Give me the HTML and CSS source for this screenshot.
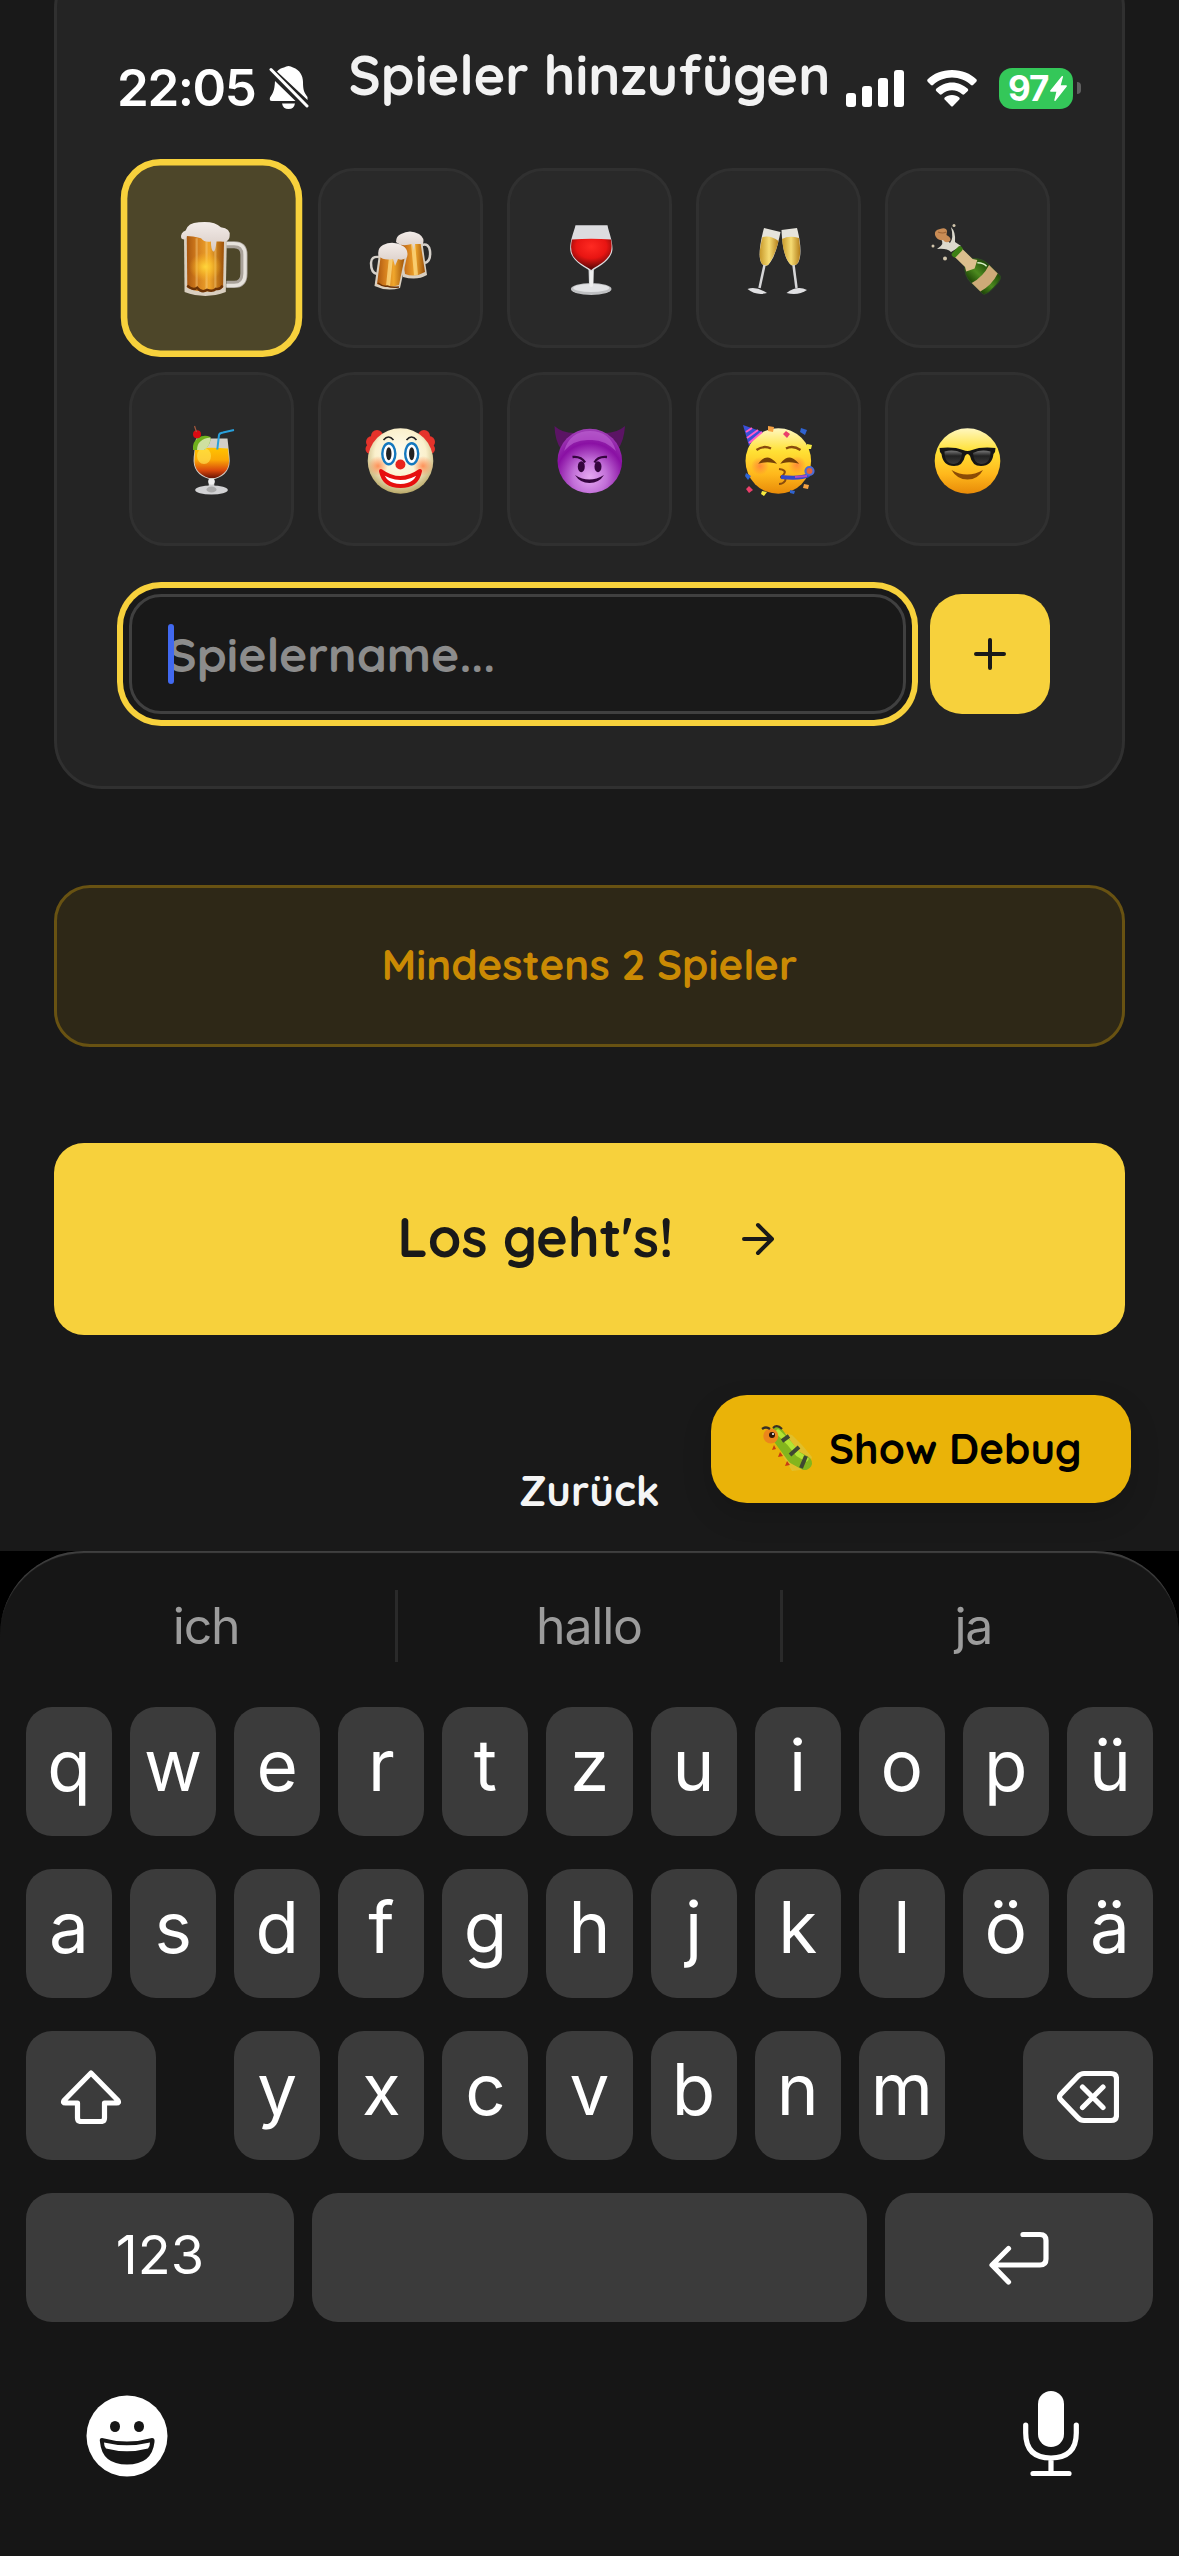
FILE: index.html
```html
<!DOCTYPE html>
<html lang="de">
<head>
<meta charset="utf-8">
<title>Spieler hinzufügen</title>
<link rel="stylesheet" href="styles.css">
</head>
<body>
<svg class="defs" width="0" height="0" aria-hidden="true">
  <defs>
    <linearGradient id="beer"><stop offset="0" stop-color="#a8560f"/><stop offset=".25" stop-color="#d07a1c"/><stop offset=".6" stop-color="#f0a62c"/><stop offset="1" stop-color="#9a4f08"/></linearGradient>
    <radialGradient id="glow"><stop offset="0" stop-color="#ffd53a"/><stop offset="1" stop-color="#ffb820" stop-opacity="0"/></radialGradient>
    <linearGradient id="foam" x2="0" y2="1"><stop offset="0" stop-color="#f3ece9"/><stop offset="1" stop-color="#d8cbc4"/></linearGradient>
    <radialGradient id="wine" cx=".5" cy=".25" r=".75"><stop offset="0" stop-color="#ff2a22"/><stop offset=".5" stop-color="#e81512"/><stop offset="1" stop-color="#4a0505"/></radialGradient>
    <linearGradient id="sekt"><stop offset="0" stop-color="#c8992a"/><stop offset=".5" stop-color="#f6dc74"/><stop offset="1" stop-color="#b57f1a"/></linearGradient>
    <linearGradient id="bottle"><stop offset="0" stop-color="#1d4405"/><stop offset=".45" stop-color="#4c8a1e"/><stop offset="1" stop-color="#1f4a08"/></linearGradient>
    <linearGradient id="drink" x2="0" y2="1"><stop offset="0" stop-color="#ffc400"/><stop offset=".4" stop-color="#fba806"/><stop offset=".75" stop-color="#d9480c"/><stop offset="1" stop-color="#6b1505"/></linearGradient>
    <linearGradient id="yellow" x2="0" y2="1"><stop offset="0" stop-color="#fff7c0"/><stop offset=".35" stop-color="#ffe135"/><stop offset=".7" stop-color="#ffb81c"/><stop offset="1" stop-color="#e88a08"/></linearGradient>
    <radialGradient id="clown" cx=".5" cy=".4" r=".6"><stop offset="0" stop-color="#fffef4"/><stop offset=".65" stop-color="#faf0cc"/><stop offset="1" stop-color="#b8a868"/></radialGradient>
    <radialGradient id="devil" cx=".5" cy=".75" r=".75"><stop offset="0" stop-color="#e6a8f2"/><stop offset=".35" stop-color="#c270d8"/><stop offset=".7" stop-color="#8a10a4"/><stop offset="1" stop-color="#a040b6"/></radialGradient>
    <radialGradient id="blush"><stop offset="0" stop-color="#ff7a3c" stop-opacity=".8"/><stop offset="1" stop-color="#ff7a3c" stop-opacity="0"/></radialGradient>
    <linearGradient id="lens" x2="0" y2="1"><stop offset="0" stop-color="#777"/><stop offset=".4" stop-color="#222"/><stop offset="1" stop-color="#3a3a3a"/></linearGradient>
  </defs>
</svg>

<main class="app">
  <section class="card">
    <h1 class="card-title">Spieler hinzufügen</h1>
    <div class="avatars">
      <button class="avatar selected"><svg class="emoji" viewBox="0 0 72 72">
        <path d="M49 24h7q9 0 9 9v17q0 10-9 10h-7" fill="none" stroke="#a9a29a" stroke-width="6.5"/>
        <path d="M49 23h7q10 0 10 10v17q0 11-10 11h-7" fill="none" stroke="#e6e2dc" stroke-width="3"/>
        <path d="M10.500 15L11 67Q30 74 48.500 67L49.500 15Z" fill="#d9cfc0"/>
        <path d="M13 15L13.500 63Q30 70 46 63L47 15Z" fill="url(#beer)"/>
        <path d="M22 18V65M31 18V66M39 20V65" stroke="#ffdf9a" stroke-opacity=".35" stroke-width="2"/>
        <ellipse cx="30" cy="44" rx="15" ry="13" fill="url(#glow)"/>
        <path d="M13.500 61q5 5 9 2q4 5 9 2q5 2 8-1q4 1 6-3" fill="none" stroke="#6b3205" stroke-width="2.200"/>
        <path d="M8 18Q7 13 12 11Q14 4 24 3.500Q38 2 44 8Q53 9 52 16Q52 22 44 21L40 21Q39 31 37 30Q35 29 35 21Q29 22 26 18Q18 16 13 16Q12 21 8 18Z" fill="url(#foam)"/>
      </svg></button>
      <button class="avatar"><svg class="emoji" viewBox="0 0 72 72">
        <path d="M57 23q7-2 8 6q1 10-5 12" fill="none" stroke="#d5d0ca" stroke-width="2.500"/>
        <path d="M34 20L38 55Q52 59 62 53L57 18Z" fill="#d9cfc0"/>
        <path d="M35.500 20L40 52Q50 56 60 50L55 18Z" fill="url(#beer)"/>
        <path d="M48 21L51 53" stroke="#ffe08a" stroke-width="4" stroke-opacity=".7"/>
        <path d="M31 20Q31 14 36 12Q45 7 54 12Q60 16 58 22L50 22L49 29L47 22Q36 25 31 20Z" fill="url(#foam)"/>
        <path d="M14 35q-8-1-8 6q0 10 6 11" fill="none" stroke="#d5d0ca" stroke-width="2.500"/>
        <path d="M14 32L9.500 64Q22 70 35 66L42 34Z" fill="#d9cfc0"/>
        <path d="M16 32L12 62Q23 67 34 63L40 34Z" fill="url(#beer)"/>
        <path d="M26 35L23 64" stroke="#ffe08a" stroke-width="4" stroke-opacity=".7"/>
        <path d="M13 61q5 4 9 3q5 2 12 1" fill="none" stroke="#6b3205" stroke-width="1.500"/>
        <path d="M13.500 34Q12 26 18 23Q28 18 38 24Q44 28 42 35Q38 39 33 37L30 44L28 37Q19 39 13.500 34Z" fill="url(#foam)"/>
      </svg></button>
      <button class="avatar"><svg class="emoji" viewBox="0 0 72 72">
        <path d="M34.500 46h5.500l-.5 17h-4.500z" fill="#c9cacc"/>
        <ellipse cx="37.200" cy="67" rx="20.300" ry="6" fill="#bfc0c2"/><ellipse cx="37.200" cy="66" rx="18" ry="4" fill="#e2e3e5"/>
        <path d="M35.500 48h3.500v16q-2 2-3.500 0z" fill="#eee"/>
        <path d="M21.500 3.200H53.500C55 11 58.500 18 58.500 27C58 38 44 45 37.200 49.500C30 45 16.500 38 16.200 27C16.200 18 19.500 11 21.500 3.200Z" fill="#dcdcdf"/>
        <path d="M18 17.500Q37 16 57 17.500Q59 29 54.500 34.500C49 42 42 44 37.200 48C32 44 25 42 19.500 34.500Q15.500 28 18 17.500Z" fill="url(#wine)"/>
      </svg></button>
      <button class="avatar"><svg class="emoji" viewBox="0 0 72 72">
        <path d="M21 6L37.500 10C35 22 32 36 25 43Q22 45 19 42C14 36 18 17 21 6Z" fill="#e6e4dc"/>
        <path d="M19.500 15Q28 13 35.500 19C33 30 29 38 25 43Q22 45 19 42C15 36 17 24 19.500 15Z" fill="url(#sekt)"/>
        <path d="M21.500 43L16.500 66" stroke="#d6d6d8" stroke-width="2.500"/><path d="M4.500 67Q13 64 24 71Q13 74 4.500 67Z" fill="#e0e0e2"/>
        <path d="M38.500 8L54 6C57 17 60 36 54 42Q50 45 47 42C41 36 39 20 38.500 8Z" fill="#e6e4dc"/>
        <path d="M39 17Q46 13 56 16C57.500 27 58 37 54 42Q50 45 47 42C42 36 40 27 39 17Z" fill="url(#sekt)"/>
        <path d="M50.500 43L53.500 66" stroke="#d6d6d8" stroke-width="2.500"/><path d="M43.500 71Q54 63 64 68Q55 74 43.500 71Z" fill="#e0e0e2"/>
      </svg></button>
      <button class="avatar"><svg class="emoji" viewBox="0 0 72 72">
        <path d="M19 30Q15 26 5 27Q14 22 8 16Q15 18 18 21Q22 16 19 5Q24 10 23 20L29 24Z" fill="#dcd9cd"/>
        <circle cx="22" cy="3.500" r="1.500" fill="#d2c6ac"/><circle cx="1" cy="24" r="1.500" fill="#d2c6ac"/><circle cx="13" cy="36.500" r="2" fill="#d2c6ac"/>
        <path d="M3 13Q2 8 8 7Q14 5 15 9L14.500 13Q20 16 18 19Q14 22 11 18Q5 19 3 13Z" fill="#c98c55"/><path d="M6 10Q11 12 14 10" fill="none" stroke="#9b6335" stroke-width="1.200"/>
        <g transform="rotate(-46 25 29.500)">
          <path d="M20 31H30V45Q37.500 52 37.500 60V77Q37.500 81 25 81Q12.500 81 12.500 77V60Q12.500 52 20 45Z" fill="url(#bottle)" stroke="#2c4a22"/>
          <path d="M31 52Q35 56 35 61" fill="none" stroke="#d9f0c8" stroke-width="1.500"/>
          <path d="M19.500 31H30.500V46L33 50L25 54L17 50L19.500 46Z" fill="#dcbf8e"/>
          <path d="M12.500 62Q25 66 37.500 62V74Q25 78 12.500 74Z" fill="#cdaa78"/>
          <rect x="18.500" y="27" width="13" height="5.500" rx="2.500" fill="#3d8014"/>
        </g>
      </svg></button>
      <button class="avatar"><svg class="emoji" viewBox="0 0 72 72">
        <path d="M33.500 54h4l1 10h-6z" fill="#ccc"/><circle cx="35.500" cy="58.500" r="3.300" fill="#eee"/>
        <ellipse cx="35.500" cy="67" rx="16.300" ry="4.500" fill="#d2d2d4"/><ellipse cx="35.500" cy="66.500" rx="5" ry="3" fill="#aaa"/>
        <path d="M20 15.500H51.500L53.500 34Q55.500 51 39 56H33Q16 51 17.700 34Z" fill="#d2cfc8"/>
        <path d="M19 25.500Q36 24 52 25.500L53 37Q53.500 50 39 55H33Q18 50 18.500 37Z" fill="url(#drink)"/>
        <ellipse cx="28" cy="33" rx="7" ry="8" fill="#ffe95c" opacity=".6"/>
        <path d="M17 27Q16 19 22 15Q28 11 34.500 14Q35 22 28 27Z" fill="#6fb01c"/><path d="M21 27Q21 16 34.500 14.500Q34 24 28 27Z" fill="#cfe0a0"/>
        <circle cx="21" cy="11.300" r="4" fill="#da0b12"/><path d="M20.500 9L18.500 3" stroke="#a5583d" stroke-width="1.200"/>
        <path d="M41.300 26.500L43 12Q43.500 10 47 9.500L58 7" fill="none" stroke="#28a0dc" stroke-width="2"/>
      </svg></button>
      <button class="avatar"><svg class="emoji" viewBox="0 0 72 72">
        <g fill="#e5332b"><circle cx="12" cy="13" r="6"/><circle cx="7" cy="19" r="6"/><circle cx="5.500" cy="26" r="5"/><circle cx="59" cy="13" r="6"/><circle cx="64" cy="19" r="6"/><circle cx="65" cy="26" r="5"/></g>
        <circle cx="35.500" cy="38" r="32.800" fill="url(#clown)"/>
        <circle cx="13" cy="43" r="10" fill="url(#blush)"/><circle cx="58" cy="43" r="10" fill="url(#blush)"/>
        <path d="M18.500 17q5-6 10 0M41.500 17q5-6 10 0" fill="none" stroke="#222" stroke-width="1.600"/>
        <g fill="#fff" stroke="#1478be" stroke-width="2.400"><ellipse cx="23.800" cy="30.700" rx="6.500" ry="10.500"/><ellipse cx="46.700" cy="30.700" rx="6.500" ry="10.500"/></g>
        <ellipse cx="23.800" cy="30.700" rx="2.700" ry="6.500" fill="#222"/><ellipse cx="46.700" cy="30.700" rx="2.700" ry="6.500" fill="#222"/>
        <circle cx="35.400" cy="41.500" r="5" fill="#e8241c"/>
        <path d="M16 48Q35 62 55 48Q52 63 35.500 63Q19 63 16 48Z" fill="#fff" stroke="#e60f0f" stroke-width="4" stroke-linejoin="round"/>
      </svg></button>
      <button class="avatar"><svg class="emoji" viewBox="0 0 72 72">
        <path d="M.5 3Q8 10 20 10L7 26Q1 18 .5 3ZM71 3Q63 10 51 10L64 26Q70 18 71 3Z" fill="#5b1464"/>
        <circle cx="35.800" cy="38" r="32.300" fill="url(#devil)"/>
        <path d="M10 28Q16 8 36 8Q56 8 62 28Q50 16 36 17Q20 16 10 28Z" fill="#c56bd8" opacity=".55"/>
        <ellipse cx="27.300" cy="43.700" rx="3.500" ry="5.500" fill="#35053e"/><ellipse cx="44" cy="43.700" rx="3.500" ry="5.500" fill="#35053e"/>
        <path d="M18.500 34Q27 33 31 39.500M53 34Q44 33 40.500 39.500" fill="none" stroke="#35053e" stroke-width="2.400"/>
        <path d="M21 52Q35 61 50 52Q45 60 35.500 60Q26 60 21 52Z" fill="#35053e"/>
      </svg></button>
      <button class="avatar"><svg class="emoji" viewBox="0 0 72 72">
        <circle cx="35.300" cy="38" r="32.800" fill="url(#yellow)"/>
        <circle cx="17" cy="43" r="9" fill="url(#blush)"/><circle cx="54" cy="42" r="9" fill="url(#blush)"/>
        <path d="M0 2L20 9Q11 13 6 23Z" fill="#3a4fd8"/><path d="M3 9L9 5M4 15L15 7M6 20L19 9" stroke="#ff5cc8" stroke-width="2"/>
        <path d="M13.500 27q7-5 14.500-1.500M43 25.500q7-3.500 14.500 1.500" fill="none" stroke="#8a4c0c" stroke-width="2.400"/>
        <path d="M18 39Q24 32 31 39Q24 37.500 18 39ZM40 39Q46 32 53 39Q46 37.500 40 39Z" fill="#754108" stroke="#754108" stroke-width="2"/>
        <path d="M36 46q8 1 5 5q-2 3-4 3q7 0 5 4q-2 3-6 3" fill="none" stroke="#8a4c0c" stroke-width="2"/>
        <path d="M38 54Q58 56 66 52" fill="none" stroke="#3547c8" stroke-width="4"/><path d="M52 54L64 53" stroke="#b04ac0" stroke-width="2"/>
        <circle cx="66.500" cy="48" r="4" fill="#e2653c" stroke="#4c6bd4" stroke-width="2.200"/>
        <g fill="#f5a142"><path d="M25 3l6 1-1 5-5-1zM61 61l5 1-1 4-5-1z"/></g><g fill="#ea3f6b"><path d="M43 8l4 3-3 4-4-4zM6 63l4 4-4 3-3-4z"/></g>
        <g fill="#2f63d0"><path d="M58 5l6 2-2 5-5-3zM3 50l5 3-3 4-3-4zM47 67l5 1-1 3-4-1z"/></g><g fill="#f7ea40"><path d="M64 21l5 1-1 4-4 0zM19 68l5 1-3 4-3-2z"/></g>
      </svg></button>
      <button class="avatar"><svg class="emoji" viewBox="0 0 72 72">
        <circle cx="35.500" cy="38" r="32.800" fill="url(#yellow)"/>
        <path d="M7.500 25Q22 23.500 31 27Q35.500 29 40 27Q49 23.500 63.500 25L63 29L61.500 31Q60 43 49 43Q40 43 38 33Q35.500 29 33 33Q31 43 22 43Q11 43 9.500 31L8 29Z" fill="#151515"/>
        <path d="M12.500 28.500Q22 26 30 30Q29 41 22 41Q12.500 41 12.500 28.500ZM41 30Q49 26 58.500 28.500Q58.500 41 49 41Q42 41 41 30Z" fill="url(#lens)"/>
        <path d="M19.500 47Q35 56 51 47Q46 56.500 35.500 56.500Q25 56.500 19.500 47Z" fill="#8b4b06"/>
      </svg></button>
    </div>
    <div class="name-row">
      <div class="name-input"><span class="caret"></span><span class="placeholder">Spielername...</span></div>
      <button class="add"><svg class="line-icon" viewBox="0 0 24 24"><path d="M5 12h14M12 5v14"/></svg></button>
    </div>
  </section>

  <div class="notice">Mindestens 2 Spieler</div>
  <button class="start"><span>Los geht's!</span><svg class="line-icon" viewBox="0 0 24 24"><path d="M5 12h14M12 5l7 7-7 7"/></svg></button>
  <button class="back">Zurück</button>

  <button class="debug">
    <svg class="bug" viewBox="0 0 52 48">
      <path d="M16 6L30 10L40 20L50 32L46 44L30 46L20 30Z" fill="#d8cf55" opacity=".45"/>
      <path d="M15 9L23 20L32 32L43 38" fill="none" stroke="#83b51d" stroke-width="14" stroke-linecap="round" stroke-linejoin="round"/>
      <path d="M16 7L27 18L36 29L44 34" fill="none" stroke="#b2e334" stroke-width="5" stroke-linecap="round"/>
      <path d="M20 16L27 11M28 30L37 22M39 43L44 31" stroke="#3f4731" stroke-width="4"/>
      <circle cx="8.800" cy="11" r="7.500" fill="#ec861b"/><circle cx="10" cy="10" r="3" fill="#2a160a"/><circle cx="11" cy="9" r="1" fill="#fff"/>
      <path d="M0 4Q4 1 8 4M11 3Q15-1 20 4" fill="none" stroke="#373026" stroke-width="2.200"/>
      <path d="M12 20l-2 5 4-1zM18 27l-2 5 5-1zM25 36l-2 5 5-1z" fill="#c93b12"/>
    </svg>
    <span>Show Debug</span>
  </button>
</main>

<header class="status">
  <span class="clock">22:05</span>
  <svg class="bell" viewBox="0 0 40 44">
    <path d="M8 5.500C10 3 12.500 2 15 1.500Q19.500-1.500 24 1.500C31 4 34 10 34 16C34 24 35 26 38.500 31V34Z" fill="#fff"/>
    <path d="M6 15L26.500 35H3Q0 35 1 31.500C4 27 5.500 25 6 15Z" fill="#fff"/>
    <path d="M13 37.500H26Q25 43 19.500 43Q14 43 13 37.500Z" fill="#fff"/>
    <path d="M2 3.500L38 40" stroke="#fff" stroke-width="3" stroke-linecap="round"/>
  </svg>
  <div class="status-right">
    <svg class="signal" viewBox="0 0 58 37" fill="#fff"><rect y="23" width="10" height="14" rx="3"/><rect x="16" y="16" width="10" height="21" rx="3"/><rect x="32" y="8" width="10" height="29" rx="3"/><rect x="48" width="10" height="37" rx="3"/></svg>
    <svg class="wifi" viewBox="0 0 50 37" fill="#fff"><path d="M25 0C35 0 43.500 3.500 49.300 9.300Q50.300 10.500 49.300 11.700L46 15Q45 15.800 44 15C39 10.300 32 7.500 25 7.500S11 10.300 6 15Q5 15.800 4 15L.7 11.700Q-.3 10.500 .7 9.300C6.500 3.500 15 0 25 0Z"/><path d="M25 12.500C31 12.500 36.500 15 40.800 18.800Q41.800 20 40.800 21L37.300 24.300Q36.300 25.200 35.200 24.300C32.300 21.800 28.800 20.300 25 20.300S17.700 21.800 14.800 24.300Q13.700 25.200 12.700 24.300L9.200 21Q8.200 20 9.200 18.800C13.500 15 19 12.500 25 12.500Z"/><path d="M25 25C28 25 30.500 26 32.300 27.500Q33.200 28.500 32.300 29.600L25.800 36.200Q25 37 24.200 36.200L17.700 29.600Q16.800 28.500 17.700 27.500C19.500 26 22 25 25 25Z"/></svg>
    <div class="battery"><span>97</span><svg viewBox="0 0 17 25"><path d="M12.300 .8L.8 15H7.300L5 24.200L16.200 10H9.800Z" fill="#fff" stroke="#fff" stroke-width="1.400" stroke-linejoin="round"/></svg></div>
    <span class="nub"></span>
  </div>
</header>

<section class="keyboard">
  <div class="suggestions"><span>ich</span><span>hallo</span><span>ja</span></div>
  <div class="keys">
    <div class="row"><kbd>q</kbd><kbd>w</kbd><kbd>e</kbd><kbd>r</kbd><kbd>t</kbd><kbd>z</kbd><kbd>u</kbd><kbd>i</kbd><kbd>o</kbd><kbd>p</kbd><kbd>ü</kbd></div>
    <div class="row"><kbd>a</kbd><kbd>s</kbd><kbd>d</kbd><kbd>f</kbd><kbd>g</kbd><kbd>h</kbd><kbd>j</kbd><kbd>k</kbd><kbd>l</kbd><kbd>ö</kbd><kbd>ä</kbd></div>
    <div class="row">
      <kbd class="shift"><svg width="62" height="54" viewBox="0 0 62 54"><path d="M31 3L58 30.500Q59.500 33 56.500 33H44.500V48Q44.500 51.500 41 51.500H21Q17.500 51.500 17.500 48V33H5.500Q2.500 33 4 30.500Z"/></svg></kbd>
      <kbd>y</kbd><kbd>x</kbd><kbd>c</kbd><kbd>v</kbd><kbd>b</kbd><kbd>n</kbd><kbd>m</kbd>
      <kbd class="delete"><svg width="62" height="54" viewBox="0 0 62 54"><path d="M27 3.500H54Q59.500 3.500 59.500 9V45Q59.500 50.500 54 50.500H27Q23.500 50.500 21 47.800L3.500 29.500Q1.500 27 3.500 24.500L21 6.200Q23.500 3.500 27 3.500ZM25.500 17L46 37.500M46 17L25.500 37.500"/></svg></kbd>
    </div>
    <div class="row bottom">
      <kbd class="numbers">123</kbd><kbd></kbd>
      <kbd class="return"><svg width="60" height="54" viewBox="0 0 60 54"><path d="M34 3.500H51Q57 3.500 57 9.500V28Q57 34 51 34H4M19.500 17.500L3 34L19.500 51"/></svg></kbd>
    </div>
  </div>
  <div class="dock">
    <svg class="smiley" width="82" height="82" viewBox="0 0 82 82"><circle cx="41" cy="41" r="40.500" fill="#fff"/><g fill="#161616"><ellipse cx="29" cy="31.500" rx="5" ry="5.500"/><ellipse cx="53" cy="31.500" rx="5" ry="5.500"/><path d="M16 43Q41 50 66 43Q69 43 68.500 47Q66 69.500 41 69.500T14 47Q13 43 16 43Z"/></g><path d="M18 47.500Q41 53 64 47.500Q64 51.500 62 53.500Q41 59 20 53.500Q18 51.500 18 47.500Z" fill="#fff"/></svg>
    <svg width="56" height="86" viewBox="0 0 56 86"><rect x="15" y="0" width="26" height="56" rx="13" fill="#fff"/><path d="M2.700 34V42Q2.700 67 28 67Q53.300 67 53.300 42V34M28 67V82M10 82.500H46" fill="none" stroke="#fff" stroke-width="5.200" stroke-linecap="round"/></svg>
  </div>
</section>
</body>
</html>
```
FILE: styles.css
```css
* { box-sizing: border-box; }

body {
  margin: 0;
  width: 1179px;
  height: 2556px;
  overflow: hidden;
  position: relative;
  background: #000;
  color: #f5f5f5;
  font-family: Quicksand, Lato, sans-serif;
}

svg { display: block; flex: none; }
.defs { position: absolute; }

button {
  border: 0;
  padding: 0;
  font: inherit;
  color: inherit;
}

/* App */
.app {
  position: relative;
  display: flex;
  flex-direction: column;
  height: 1551px;
  padding: 0 54px;
  background: #191919;
  overflow: hidden;
}

.card {
  margin-top: -40px;
  height: 829px;
  flex: none;
  padding: 82px 72px 0;
  background: #242424;
  border: 3px solid #303030;
  border-radius: 48px;
}

.card-title {
  margin: 0 0 63px;
  font-size: 54px;
  line-height: 60px;
  font-weight: 700;
  text-align: center;
  color: #f2f2f2;
}

.avatars {
  display: grid;
  grid-template-columns: repeat(5, 165px);
  grid-template-rows: 180px 174px;
  gap: 24px;
}

.avatar {
  display: flex;
  align-items: center;
  justify-content: center;
  background: #292929;
  border: 3px solid #303030;
  border-radius: 36px;
}

.avatar.selected {
  background: #4d4629;
  border: 6px solid #f7d13c;
  transform: scale(1.1);
}

.emoji { width: 72px; height: 72px; overflow: visible; }

.name-row {
  display: flex;
  gap: 24px;
  margin-top: 48px;
}

.name-input {
  width: 777px;
  height: 120px;
  padding-left: 36px;
  display: flex;
  align-items: center;
  background: #191919;
  border: 3px solid #404040;
  border-radius: 32px;
  box-shadow: 0 0 0 6px #191919, 0 0 0 12px #f7d13c;
}

.caret {
  width: 6px;
  height: 60px;
  margin-right: -6px;
  border-radius: 3px;
  background: #4169f0;
  z-index: 1;
}

.placeholder {
  font-size: 48px;
  font-weight: 700;
  color: #8c8c8c;
}

.add {
  width: 120px;
  height: 120px;
  display: flex;
  align-items: center;
  justify-content: center;
  border-radius: 32px;
  background: #f7d13c;
  color: #191919;
}

.line-icon {
  width: 48px;
  height: 48px;
  fill: none;
  stroke: currentColor;
  stroke-width: 2;
  stroke-linecap: round;
  stroke-linejoin: round;
}

.notice {
  flex: none;
  height: 162px;
  margin-top: 96px;
  padding-bottom: 3px;
  display: flex;
  align-items: center;
  justify-content: center;
  background: #2e2817;
  border: 3px solid #685212;
  border-radius: 36px;
  color: #ca8a04;
  font-size: 42px;
  font-weight: 700;
}

.start {
  flex: none;
  height: 192px;
  margin-top: 96px;
  display: flex;
  align-items: center;
  justify-content: center;
  gap: 60px;
  border-radius: 30px;
  background: #f7d13c;
  color: #191919;
  font-size: 54px;
  font-weight: 700;
}

.start span { padding-bottom: 4px; }

.back {
  align-self: center;
  margin-top: 126px;
  background: none;
  font-size: 42px;
  line-height: 60px;
  font-weight: 700;
}

/* Floats over the page content */
.debug {
  position: absolute;
  right: 48px;
  bottom: 48px;
  width: 420px;
  height: 108px;
  display: flex;
  align-items: center;
  gap: 15px;
  padding-left: 51px;
  background: #eab308;
  border-radius: 36px;
  color: #000;
  font-size: 42px;
  font-weight: 700;
  box-shadow: 0 12px 30px rgba(0, 0, 0, .15);
}

.debug span { padding-bottom: 2px; }
.bug { width: 52px; height: 48px; overflow: visible; }

/* System status bar, over the page */
.status {
  position: absolute;
  top: 60px;
  left: 117px;
  right: 98px;
  height: 56px;
  display: flex;
  align-items: center;
  color: #fff;
  font-family: Inter, sans-serif;
}

.clock { font-size: 51px; line-height: 56px; font-weight: 600; letter-spacing: -1.4px; width: 152px; white-space: nowrap; }
.bell { width: 40px; height: 44px; }
.status-right { margin-left: auto; display: flex; align-items: center; }
.signal { width: 58px; height: 37px; margin-right: 23px; }
.wifi { width: 50px; height: 37px; margin-right: 22px; }

.battery {
  width: 74px;
  height: 41px;
  display: flex;
  align-items: center;
  padding-left: 9px;
  border-radius: 13px;
  background: #34c759;
  font-size: 35px;
  font-weight: 700;
  letter-spacing: -1px;
}

.battery span { width: 42px; }
.battery svg { width: 17px; height: 25px; }
.nub { width: 4px; height: 12px; margin-left: 4px; border-radius: 0 4px 4px 0; background: #606060; }

/* On-screen keyboard */
.keyboard {
  height: 1005px;
  background: #161616;
  border-radius: 84px 84px 0 0;
  box-shadow: inset 0 3px 1px -1px #404040;
  color: #fff;
  font-family: Inter, sans-serif;
}

.suggestions {
  display: grid;
  grid-template-columns: 1fr 1fr 1fr;
  height: 156px;
  padding: 39px 15px 45px 11px;
}

.suggestions span {
  text-align: center;
  font-size: 50px;
  line-height: 72px;
  letter-spacing: -1.2px;
  color: #9c9c9c;
}

.suggestions span:first-child { padding-left: 6px; }
.suggestions span + span { border-left: 3px solid #2a2a2a; }

.keys {
  display: flex;
  flex-direction: column;
  gap: 33px;
  padding: 0 26px;
}

.row {
  display: grid;
  grid-template-columns: repeat(11, 1fr);
  gap: 18px;
}

.row.bottom { grid-template-columns: 268px 1fr 268px; }

kbd {
  height: 129px;
  border-radius: 26px;
  background: #3b3b3b;
  text-align: center;
  font-family: Inter, sans-serif;
  font-size: 71px;
  line-height: 117px;
}

.shift, .delete, .return {
  display: flex;
  align-items: center;
  justify-content: center;
  padding-top: 3px;
}

.shift { grid-column: span 2; width: 130px; }
.delete { grid-column: span 2; width: 130px; justify-self: end; }
.return { padding: 0; }

kbd svg {
  fill: none;
  stroke: #fff;
  stroke-width: 5.2;
  stroke-linecap: round;
  stroke-linejoin: round;
}

.numbers { font-size: 54px; line-height: 123px; }

.dock {
  display: flex;
  justify-content: space-between;
  align-items: flex-start;
  padding: 69px 100px 0 86px;
}

.smiley { margin-top: 4px; }
```
